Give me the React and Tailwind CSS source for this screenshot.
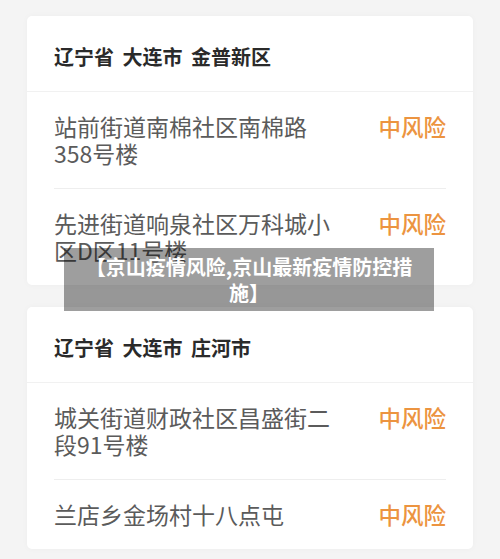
import React from 'react';

const groups = [
  {
    area: '辽宁省 大连市 金普新区',
    items: ['站前街道南棉社区南棉路358号楼', '先进街道响泉社区万科城小区D区11号楼'],
  },
  {
    area: '辽宁省 大连市 庄河市',
    items: ['城关街道财政社区昌盛街二段91号楼', '兰店乡金场村十八点屯'],
  },
];

const RiskCard = ({ area, items }) => (
  <div className="bg-white rounded-[5px] shadow-[0_0_6px_rgba(0,0,0,0.03)]">
    <div className="px-[27px] pt-[27px] pb-[20px] border-b border-[#f1f1f1]">
      <div className="text-[20px] leading-[28px] font-bold text-[#2a2a2a] [word-spacing:4px]">{area}</div>
    </div>
    <div className="px-[27px]">
      {items.map((item, i) => (
        <div
          key={i}
          className={`flex items-start justify-between py-[21px] ${
            i < items.length - 1 ? 'border-b border-[#eeeeee]' : ''
          }`}
        >
          <div className="w-[280px] text-[23px] leading-[27px] text-[#5b5b5b]">{item}</div>
          <div className="text-[22.5px] leading-[27px] text-[#ec9440] font-medium">中风险</div>
        </div>
      ))}
    </div>
  </div>
);

export default function App() {
  return (
    <div
      className="relative w-[500px] h-[559px] bg-[#f4f4f4] px-[27px] pt-[16px] flex flex-col gap-[22px] overflow-hidden"
      style={{ fontFamily: '"Noto Sans CJK SC", "Noto Sans", sans-serif' }}
    >
      {groups.map((g, i) => (
        <RiskCard key={i} {...g} />
      ))}
      <div className="absolute left-[64px] top-[248px] w-[370px] h-[63px] bg-[rgba(0,0,0,0.38)] flex items-center justify-center px-[10px]">
        <div className="text-white text-[20px] leading-[26px] font-bold text-center">
          【京山疫情风险,京山最新疫情防控措施】
        </div>
      </div>
    </div>
  );
}
